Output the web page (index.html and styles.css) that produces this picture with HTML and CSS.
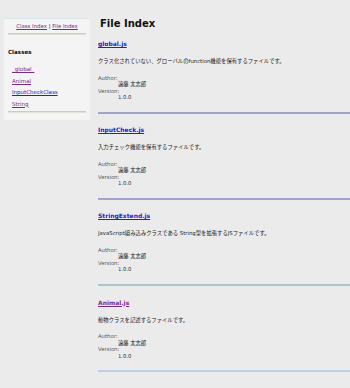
FILE: index.html
```html
<!DOCTYPE html>
<html lang="ja">
<head>
<meta charset="utf-8">
<title>File Index</title>
<link rel="stylesheet" href="styles.css">
</head>
<body>
<div class="page">
  <aside class="sidebar">
    <div class="nav-links"><a class="visited" href="#">Class Index</a> | <a class="visited" href="#">File Index</a></div>
    <div class="side-hr"></div>
    <h2 class="side-title">Classes</h2>
    <ul class="class-list">
      <li><a class="visited" href="#">_global_</a></li>
      <li><a class="visited" href="#">Animal</a></li>
      <li><a class="link" href="#">InputCheckClass</a></li>
      <li><a class="visited" href="#">String</a></li>
    </ul>
    <div class="side-hr"></div>
  </aside>
  <main class="main">
    <h1 class="title">File Index</h1>

    <section class="file">
      <div class="file-name"><a class="link" href="#">global.js</a></div>
      <div class="desc">クラス化されていない、グローバルのfunction機能を保有するファイルです。</div>
      <dl class="meta">
        <dt>Author:</dt><dd class="author">遠藤 太志郎</dd>
        <dt>Version:</dt><dd class="ver">1.0.0</dd>
      </dl>
      <div class="rule rule-a"></div>
    </section>

    <section class="file">
      <div class="file-name"><a class="link" href="#">InputCheck.js</a></div>
      <div class="desc">入力チェック機能を保有するファイルです。</div>
      <dl class="meta">
        <dt>Author:</dt><dd class="author">遠藤 太志郎</dd>
        <dt>Version:</dt><dd class="ver">1.0.0</dd>
      </dl>
      <div class="rule rule-a"></div>
    </section>

    <section class="file">
      <div class="file-name"><a class="link" href="#">StringExtend.js</a></div>
      <div class="desc">JavaScript組み込みクラスである String型を拡張するJSファイルです。</div>
      <dl class="meta">
        <dt>Author:</dt><dd class="author">遠藤 太志郎</dd>
        <dt>Version:</dt><dd class="ver">1.0.0</dd>
      </dl>
      <div class="rule rule-b"></div>
    </section>

    <section class="file">
      <div class="file-name"><a class="visited" href="#">Animal.js</a></div>
      <div class="desc">動物クラスを記述するファイルです。</div>
      <dl class="meta">
        <dt>Author:</dt><dd class="author">遠藤 太志郎</dd>
        <dt>Version:</dt><dd class="ver">1.0.0</dd>
      </dl>
      <div class="rule rule-c"></div>
    </section>
  </main>
</div>
</body>
</html>
```

FILE: styles.css
```css
html, body {
  margin: 0;
  padding: 0;
  background: #ebebeb;
}
body {
  font-family: "DejaVu Sans", "Noto Sans CJK JP", sans-serif;
  color: #222;
  width: 350px;
  height: 388px;
  overflow: hidden;
}
a { text-decoration: underline; }
a.link { color: #2222c8; }
a.visited { color: #7a2a8a; }

.page {
  display: flex;
  align-items: flex-start;
}

.sidebar {
  width: 86px;
  box-sizing: border-box;
  margin: 18px 0 0 4px;
  padding: 3px 4px 7px;
  background: #f4f4f4;
  border-top: 1px solid #dce8ee;
  flex: none;
}
.nav-links {
  text-align: center;
  font-size: 5.4px;
  line-height: 8px;
}
.side-hr {
  height: 1px;
  background: #cfcbbd;
  margin: 3px 0 0;
  border-bottom: 1px solid #e2e0d8;
}
.side-title {
  font-size: 5.6px;
  font-weight: bold;
  line-height: 8px;
  margin: 13px 0 0;
  color: #111;
}
.class-list {
  list-style: none;
  margin: 8px 0 0;
  padding: 0 0 0 4px;
  font-size: 5.5px;
  line-height: 11.5px;
}
.class-list + .side-hr { margin-top: 1px; }

.main {
  flex: 1;
  margin-left: 8px;
  min-width: 0;
}
.title {
  font-size: 10px;
  font-weight: bold;
  line-height: 12px;
  margin: 18px 0 0 2px;
  color: #111;
}
.file:first-of-type { margin-top: 10px; }
.file-name {
  font-size: 6px;
  font-weight: bold;
  line-height: 8px;
}
.desc {
  font-size: 5.35px;
  line-height: 8px;
  margin-top: 9px;
  color: #222;
}
.meta {
  margin: 9.5px 0 0;
  font-size: 5.3px;
  line-height: 6.5px;
}
.meta dt { color: #555; }
.meta dd { margin: 0 0 0 20px; }
.meta dd.author { color: #111; }
.meta dd.ver { color: #334; }
.rule {
  height: 2px;
  margin: 11.3px 0 12.4px;
}
.rule-a { background: #a3a3cf; }
.rule-b { background: #a6c8c8; }
.rule-c { background: #bcd0e8; }
```
